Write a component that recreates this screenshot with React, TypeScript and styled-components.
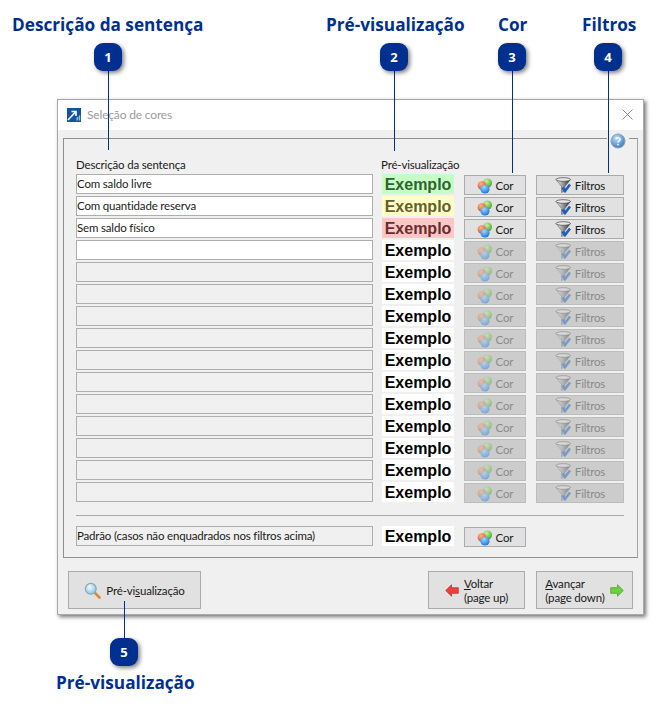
import React from 'react';
import styled, { createGlobalStyle } from 'styled-components';

const GlobalStyle = createGlobalStyle`
  html, body {
    margin: 0;
    padding: 0;
    background: #fff;
  }
`;

const Page = styled.div`
  position: relative;
  width: 667px;
  height: 713px;
  overflow: hidden;
  padding: 99px 0 0 57px;
  box-sizing: border-box;
  font-family: Lato, 'Noto Sans', sans-serif;
  font-size: 11.5px;
  letter-spacing: -0.17px;
  color: #1a1a1a;
`;

const Window = styled.div`
  width: 587px;
  height: 516px;
  box-sizing: border-box;
  border: 1px solid #a9a9a9;
  background: #f0f0f0;
  box-shadow: 2px 2px 4px rgba(0, 0, 0, 0.55);
  display: flex;
  flex-direction: column;
`;

const TitleBar = styled.div`
  height: 30px;
  box-sizing: border-box;
  background: #fff;
  display: flex;
  align-items: center;
  gap: 6px;
  padding: 0 10px 1px 9px;
`;

const TitleText = styled.span`
  flex: 1;
  color: #9b9b9b;
  font-size: 12px;
`;

const Body = styled.div`
  flex: 1;
  padding: 8px 5px 0;
  display: flex;
  flex-direction: column;
`;

const Panel = styled.div`
  position: relative;
  height: 420px;
  box-sizing: border-box;
  border: 1px solid #8f8f8f;
  border-right-color: #a5a5a5;
  padding: 17px 13px 0 12px;
`;

const HelpSpot = styled.div`
  position: absolute;
  top: -6px;
  right: 8px;
  width: 16px;
  height: 16px;
  padding: 0 3px;
  background: #f0f0f0;
`;

const ColumnLabels = styled.div`
  display: grid;
  grid-template-columns: 305px 1fr;
  height: 18px;
  line-height: 17px;
`;

const RowList = styled.div`
  display: flex;
  flex-direction: column;
  gap: 1px;
`;

const Row = styled.div`
  display: flex;
  column-gap: 10px;
  height: 21px;
  align-items: flex-start;
`;

const TextCell = styled.div<{ $disabled?: boolean }>`
  flex: 0 0 297px;
  margin-right: -1px;
  height: 20px;
  box-sizing: border-box;
  border: 1px solid #aeaeae;
  background: ${p => (p.$disabled ? '#f0f0f0' : '#fff')};
  line-height: 17px;
  white-space: nowrap;
  overflow: hidden;
`;

const Sample = styled.div<{ $bg: string; $fg: string }>`
  flex: 0 0 72px;
  height: 20px;
  background: ${p => p.$bg};
  color: ${p => p.$fg};
  font-family: 'Liberation Sans', Arial, sans-serif;
  font-weight: 700;
  font-size: 16px;
  letter-spacing: 0;
  line-height: 21px;
  text-align: center;
`;

const ActionButton = styled.div<{ $disabled?: boolean; $width: number }>`
  flex: 0 0 ${p => p.$width}px;
  height: 20px;
  margin-top: 1px;
  padding-top: 1px;
  box-sizing: border-box;
  border: 1px solid ${p => (p.$disabled ? '#bdbdbd' : '#ababab')};
  background: ${p => (p.$disabled ? '#cccccc' : '#e1e1e1')};
  color: ${p => (p.$disabled ? '#8b8b8b' : '#1a1a1a')};
  display: flex;
  align-items: center;
  justify-content: center;
  gap: 3px;
  line-height: 18px;

  svg {
    opacity: ${p => (p.$disabled ? 0.45 : 1)};
  }
`;

const Separator = styled.div`
  height: 1px;
  background: #a9a9a9;
  margin: 12px 0 10px;
`;

const Footer = styled.div`
  display: flex;
  align-items: flex-start;
  gap: 11px;
  padding: 13px 5px 0;
`;

const FooterButton = styled.div<{ $width: number }>`
  width: ${p => p.$width}px;
  height: 38px;
  padding-top: 1px;
  box-sizing: border-box;
  border: 1px solid #ababab;
  background: #e1e1e1;
  display: flex;
  align-items: center;
  justify-content: center;
  gap: 5px;
  line-height: 14px;
`;

const Spacer = styled.div`
  flex: 1;
`;

const Key = styled.span`
  text-decoration: underline;
`;

const Heading = styled.div<{ $x: number; $y: number }>`
  position: absolute;
  left: ${p => p.$x}px;
  top: ${p => p.$y}px;
  color: #00308f;
  font-family: 'Open Sans', sans-serif;
  font-weight: 700;
  font-size: 17.2px;
  letter-spacing: 0;
  line-height: 24px;
  white-space: nowrap;
`;

const Badge = styled.div<{ $x: number; $y: number }>`
  position: absolute;
  left: ${p => p.$x}px;
  top: ${p => p.$y}px;
  width: 28px;
  height: 28px;
  border-radius: 9px;
  background: #00308f;
  box-shadow: 2px 2px 4px rgba(0, 0, 0, 0.5);
  color: #fff;
  font-family: 'Open Sans', sans-serif;
  font-weight: 700;
  font-size: 13px;
  letter-spacing: 0;
  line-height: 28px;
  text-align: center;
`;

const Leader = styled.div<{ $x: number; $y: number; $h: number }>`
  position: absolute;
  left: ${p => p.$x}px;
  top: ${p => p.$y}px;
  width: 1px;
  height: ${p => p.$h}px;
  background: #00308f;
`;

const ColorIcon = () => (
  <svg width="16" height="16" viewBox="0 0 16 16">
    <defs>
      <radialGradient id="ballG" cx="40%" cy="30%" r="70%">
        <stop offset="0" stopColor="#c8f0a0" />
        <stop offset="1" stopColor="#4fa82e" />
      </radialGradient>
      <radialGradient id="ballR" cx="40%" cy="30%" r="70%">
        <stop offset="0" stopColor="#ffb48a" />
        <stop offset="1" stopColor="#e2501e" />
      </radialGradient>
      <radialGradient id="ballB" cx="40%" cy="30%" r="70%">
        <stop offset="0" stopColor="#9fd6ff" />
        <stop offset="1" stopColor="#1f78d8" />
      </radialGradient>
    </defs>
    <circle cx="10.5" cy="5" r="4.6" fill="url(#ballG)" />
    <circle cx="4.8" cy="7.5" r="4.2" fill="url(#ballR)" />
    <circle cx="8" cy="11" r="4.6" fill="url(#ballB)" />
  </svg>
);

const FunnelIcon = () => (
  <svg width="17" height="17" viewBox="0 0 17 17">
    <defs>
      <linearGradient id="funnelBody" x1="0" x2="1" y1="0" y2="0">
        <stop offset="0" stopColor="#f6f6f6" />
        <stop offset="0.4" stopColor="#a8a8a8" />
        <stop offset="1" stopColor="#2b2b2b" />
      </linearGradient>
    </defs>
    <path d="M1 2.5 L6.5 9.5 L6.5 15.5 L10 14 L10 9.5 L15.5 2.5 Z" fill="url(#funnelBody)" stroke="#555" strokeWidth="0.5" />
    <ellipse cx="8.2" cy="2.5" rx="7.2" ry="1.8" fill="#e8e8e8" stroke="#444" strokeWidth="0.7" />
    <path d="M7.5 10.5 L10 14 L15 7.5" fill="none" stroke="#1c5fc4" strokeWidth="2.6" />
  </svg>
);

const LensIcon = () => (
  <svg width="17" height="17" viewBox="0 0 17 17">
    <defs>
      <radialGradient id="lensGlass" cx="40%" cy="35%" r="70%">
        <stop offset="0" stopColor="#f0fbff" />
        <stop offset="1" stopColor="#7fc4ea" />
      </radialGradient>
    </defs>
    <path d="M10 10 L15.5 15.5" stroke="#d98a3a" strokeWidth="2.6" strokeLinecap="round" />
    <circle cx="6.8" cy="6.8" r="5.4" fill="url(#lensGlass)" stroke="#8da6b5" strokeWidth="1.2" />
  </svg>
);

const ArrowIcon = ({ dir }: { dir: 'left' | 'right' }) => (
  <svg width="14" height="13" viewBox="0 0 14 13">
    {dir === 'left' ? (
      <path d="M0.7 6.5 L6.5 0.8 L6.5 3.7 L13.3 3.7 L13.3 9.3 L6.5 9.3 L6.5 12.2 Z" fill="#f0403c" stroke="#b52a28" strokeWidth="0.7" />
    ) : (
      <path d="M13.3 6.5 L7.5 0.8 L7.5 3.7 L0.7 3.7 L0.7 9.3 L7.5 9.3 L7.5 12.2 Z" fill="#6cd23c" stroke="#3f9a22" strokeWidth="0.7" />
    )}
  </svg>
);

const HelpIcon = () => (
  <svg width="16" height="16" viewBox="0 0 16 16">
    <defs>
      <radialGradient id="helpBall" cx="40%" cy="30%" r="75%">
        <stop offset="0" stopColor="#bfe0fa" />
        <stop offset="1" stopColor="#2b78c8" />
      </radialGradient>
    </defs>
    <circle cx="8" cy="8" r="7" fill="url(#helpBall)" stroke="#8a9bab" strokeWidth="0.9" />
    <path d="M5.8 6.2 C6 4.4 10 4.4 10.2 6.4 C10.2 8 8 7.8 8 9.6" fill="none" stroke="#fff" strokeWidth="1.5" />
    <circle cx="8" cy="11.6" r="0.9" fill="#fff" />
  </svg>
);

const AppLogo = () => (
  <svg width="14" height="14" viewBox="0 0 14 14">
    <rect width="14" height="14" fill="#14549f" />
    <path d="M1 12 L8 4.5 M4.5 3.5 L9 3.5 L9 8" fill="none" stroke="#fff" strokeWidth="1.6" />
    <path d="M10 12.5 L10.5 9 M12.5 12.5 L12.5 7.5" stroke="#9cc3e6" strokeWidth="1.4" />
  </svg>
);

const CloseIcon = () => (
  <svg width="11" height="11" viewBox="0 0 11 11">
    <path d="M0.5 0.5 L10.5 10.5 M10.5 0.5 L0.5 10.5" stroke="#8a8a8a" strokeWidth="1" />
  </svg>
);

interface SentenceRow {
  text: string;
  bg: string;
  fg: string;
  disabled: boolean;
}

const filled: SentenceRow[] = [
  { text: 'Com saldo livre', bg: '#c6ffc6', fg: '#31632f', disabled: false },
  { text: 'Com quantidade reserva', bg: '#ffffc6', fg: '#63602f', disabled: false },
  { text: 'Sem saldo físico', bg: '#ffc6c6', fg: '#632f2f', disabled: false }
];

const rows: SentenceRow[] = [
  ...filled,
  { text: '', bg: '#fff', fg: '#000', disabled: false },
  ...Array.from({ length: 11 }, () => ({ text: '', bg: '#fff', fg: '#000', disabled: true }))
];

const callouts = [
  { n: 1, title: 'Descrição da sentença', titleX: 12, x: 94, lineH: 79 },
  { n: 2, title: 'Pré-visualização', titleX: 326, x: 380, lineH: 80 },
  { n: 3, title: 'Cor', titleX: 498, x: 498, lineH: 102 },
  { n: 4, title: 'Filtros', titleX: 582, x: 594, lineH: 102 }
];

const App: React.FC = () => (
  <Page>
    <GlobalStyle />
    <Window>
      <TitleBar>
        <AppLogo />
        <TitleText>Seleção de cores</TitleText>
        <CloseIcon />
      </TitleBar>
      <Body>
        <Panel>
          <HelpSpot>
            <HelpIcon />
          </HelpSpot>
          <ColumnLabels>
            <span>Descrição da sentença</span>
            <span>Pré-visualização</span>
          </ColumnLabels>
          <RowList>
            {rows.map((row, i) => (
              <Row key={i}>
                <TextCell $disabled={row.disabled}>{row.text}</TextCell>
                <Sample $bg={row.bg} $fg={row.fg}>Exemplo</Sample>
                <ActionButton $width={62} $disabled={i > 2}>
                  <ColorIcon />
                  Cor
                </ActionButton>
                <ActionButton $width={88} $disabled={i > 2}>
                  <FunnelIcon />
                  Filtros
                </ActionButton>
              </Row>
            ))}
          </RowList>
          <Separator />
          <Row>
            <TextCell $disabled>Padrão (casos não enquadrados nos filtros acima)</TextCell>
            <Sample $bg="#fff" $fg="#000">Exemplo</Sample>
            <ActionButton $width={62}>
              <ColorIcon />
              Cor
            </ActionButton>
          </Row>
        </Panel>
        <Footer>
          <FooterButton $width={133}>
            <LensIcon />
            <span>Pré-vi<Key>s</Key>ualização</span>
          </FooterButton>
          <Spacer />
          <FooterButton $width={97}>
            <ArrowIcon dir="left" />
            <span><Key>V</Key>oltar<br />(page up)</span>
          </FooterButton>
          <FooterButton $width={97}>
            <span><Key>A</Key>vançar<br />(page down)</span>
            <ArrowIcon dir="right" />
          </FooterButton>
        </Footer>
      </Body>
    </Window>

    {callouts.map(c => (
      <React.Fragment key={c.n}>
        <Heading $x={c.titleX} $y={13}>{c.title}</Heading>
        <Leader $x={c.x + 14} $y={71} $h={c.lineH} />
        <Badge $x={c.x} $y={43}>{c.n}</Badge>
      </React.Fragment>
    ))}
    <Leader $x={124} $y={601} $h={37} />
    <Badge $x={110} $y={638}>5</Badge>
    <Heading $x={56} $y={671}>Pré-visualização</Heading>
  </Page>
);

export default App;
